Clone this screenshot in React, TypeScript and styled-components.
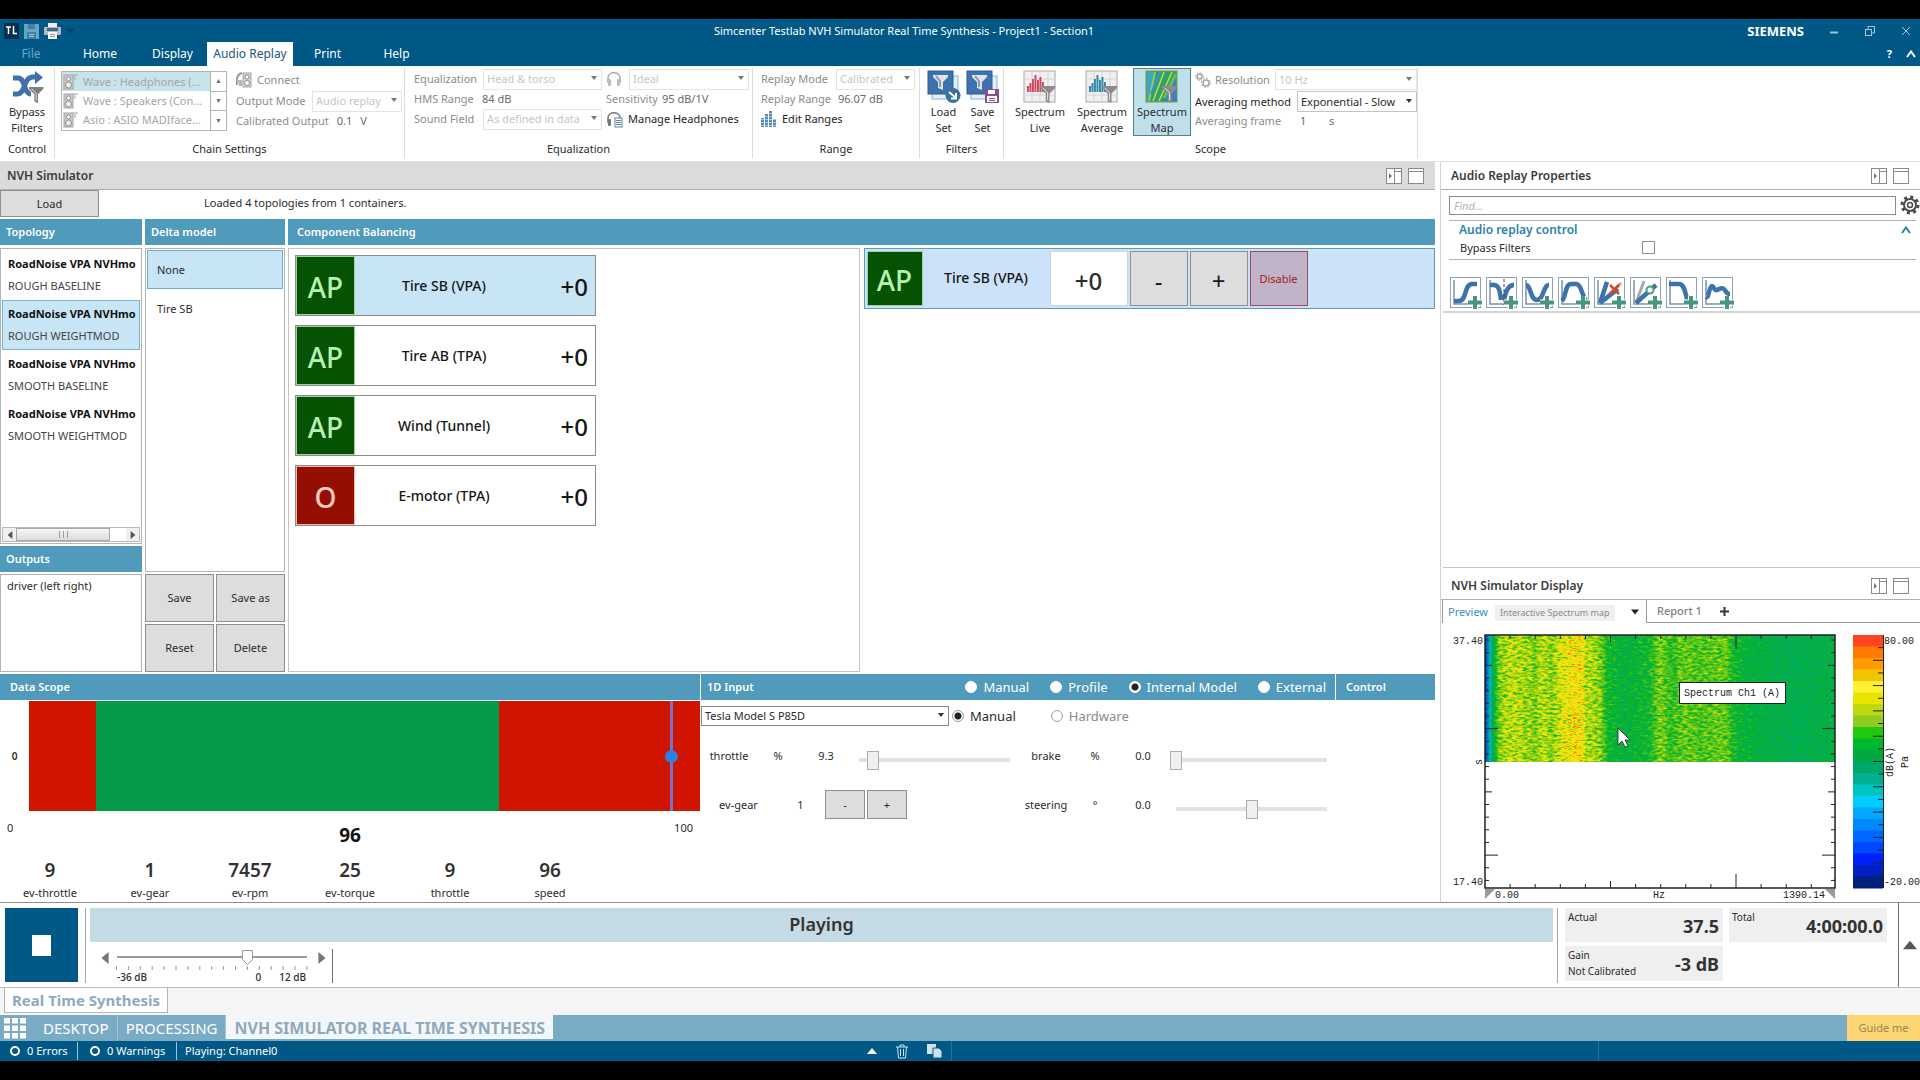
import React from 'react';
import styled, { createGlobalStyle, css } from 'styled-components';

const color = {
  brand: '#005887',
  header: '#509abb',
  nav: '#7aabc4',
  pale: '#c8e5f5',
  button: '#dddddd',
  line: '#b4b4b4',
  ink: '#2b2b2b',
  muted: '#8c8c8c',
};

const GlobalStyle = createGlobalStyle`
  *, *::before, *::after { box-sizing: border-box; }
  body { margin: 0; background: #000; }
  body, button, input, select {
    font-family: "Noto Sans", "Open Sans", sans-serif;
    font-size: 11px;
    line-height: 16px;
    color: ${color.ink};
  }
  button { padding: 0; cursor: pointer; }
  ul, h1, h2 { margin: 0; padding: 0; list-style: none; font-size: inherit; font-weight: inherit; }
  svg { display: block; flex: none; }
`;

/* ---------- shell ---------- */

const Shell = styled.div`
  display: flex;
  flex-direction: column;
  min-height: 100vh;
  padding: 19px 0;
  background: #000;
`;

const TopBar = styled.header`
  background: ${color.brand};
  color: #fff;
`;

const TitleRow = styled.div`
  display: grid;
  grid-template-columns: 1fr auto 1fr;
  align-items: center;
  height: 23px;
  padding: 0 8px 0 4px;
`;

const AppTitle = styled.h1`
  padding-right: 108px;
  line-height: 24px;
`;

const QuickAccess = styled.div`
  display: flex;
  align-items: center;
  gap: 5px;
`;

const IconButton = styled.button`
  display: flex;
  align-items: center;
  justify-content: center;
  border: 0;
  background: none;
  color: inherit;
`;

const WindowButtons = styled.div`
  display: flex;
  align-items: center;
  justify-content: flex-end;
  gap: 24px;
`;

const Vendor = styled.strong`
  font-size: 13px;
`;

const MenuRow = styled.nav`
  display: flex;
  height: 24px;
`;

const MenuTab = styled.button<{ $active?: boolean; $dim?: boolean; $width: number }>`
  width: ${(p) => p.$width}px;
  border: 0;
  font-size: 12px;
  line-height: 22px;
  background: ${(p) => (p.$active ? '#fff' : 'none')};
  color: ${(p) => (p.$active ? '#17587f' : p.$dim ? '#6fa6c4' : '#fff')};
`;

const MenuTail = styled.div`
  display: flex;
  align-items: center;
  gap: 14px;
  margin-left: auto;
  padding-right: 4px;
  font-weight: 700;
`;

/* ---------- ribbon ---------- */

const Ribbon = styled.section`
  display: flex;
  height: 96px;
  padding-top: 2px;
  background: #fff;
  border-bottom: 1px solid #e2e2e2;
`;

const Group = styled.div<{ $width: number }>`
  display: flex;
  flex-direction: column;
  width: ${(p) => p.$width}px;
  height: 90px;
  border-right: 1px solid #dcdcdc;
`;

const GroupBody = styled.div<{ $gap?: number; $pad?: number }>`
  display: flex;
  flex: 1;
  gap: ${(p) => p.$gap ?? 0}px;
  padding-left: ${(p) => p.$pad ?? 0}px;
`;

const GroupLabel = styled.div`
  text-align: center;
  line-height: 18px;
`;

const BigButton = styled.button<{ $width: number; $active?: boolean }>`
  display: flex;
  flex-direction: column;
  align-items: center;
  justify-content: flex-start;
  width: ${(p) => p.$width}px;
  height: 68px;
  padding-top: 1px;
  border: 1px solid ${(p) => (p.$active ? '#4d8296' : 'transparent')};
  background: ${(p) => (p.$active ? '#bfe0ea' : 'none')};
`;

const DeviceList = styled.div`
  display: flex;
  height: 60px;
  margin-top: 3px;
  border: 1px solid ${color.line};
`;

const Device = styled.button<{ $active?: boolean }>`
  display: flex;
  align-items: center;
  gap: 4px;
  width: 148px;
  height: 19px;
  padding: 1px;
  border: 0;
  color: #a6a6a6;
  background: ${(p) => (p.$active ? '#c7e3eb' : 'none')};
`;

const Spinner = styled.div`
  display: flex;
  flex-direction: column;
  border-left: 1px solid ${color.line};
`;

const SpinButton = styled.button`
  flex: 1;
  width: 15px;
  border: 0;
  background: none;
  font-size: 7px;
  line-height: 8px;
  color: #707070;
  & + & { border-top: 1px solid ${color.line}; }
`;

const FieldStack = styled.div`
  display: flex;
  flex-direction: column;
`;

const FieldRow = styled.div<{ $gap?: number; $ink?: boolean; $height?: number }>`
  display: flex;
  align-items: center;
  gap: ${(p) => p.$gap ?? 4}px;
  height: ${(p) => p.$height ?? 20}px;
  color: ${(p) => (p.$ink ? '#1e1e1e' : color.muted)};
  white-space: nowrap;
`;

const FieldLabel = styled.label<{ $width: number }>`
  width: ${(p) => p.$width}px;
`;

const Reading = styled.span<{ $width?: number }>`
  width: ${(p) => (p.$width ? `${p.$width}px` : 'auto')};
  color: #6a6a6a;
`;

const LinkButton = styled.button<{ $muted?: boolean }>`
  display: flex;
  align-items: center;
  gap: 5px;
  border: 0;
  background: none;
  color: ${(p) => (p.$muted ? color.muted : '#1e1e1e')};
`;

const SelectWrap = styled.span<{ $width?: number; $dark?: boolean }>`
  position: relative;
  display: block;
  width: ${(p) => (p.$width ? `${p.$width}px` : '100%')};
  &::after {
    content: '';
    position: absolute;
    right: 5px;
    top: 50%;
    margin-top: -3px;
    border: 3px solid transparent;
    border-top: 4px solid ${(p) => (p.$dark ? '#333' : '#777')};
    border-bottom: 0;
    pointer-events: none;
  }
`;

const SelectBox = styled.select<{ $tone?: 'faint' | 'light' | 'dark' }>`
  appearance: none;
  display: block;
  width: 100%;
  height: ${(p) => (p.$tone === 'dark' ? 20 : 21)}px;
  padding: 0 12px 0 3px;
  border: 1px solid
    ${(p) => (p.$tone === 'dark' ? '#8a8a8a' : p.$tone === 'light' ? '#c4c4c4' : '#e4e4e4')};
  border-radius: 0;
  background: #fff;
  color: ${(p) => (p.$tone === 'faint' ? '#c6c6c6' : color.ink)};
  opacity: 1;
`;

function Select(props: {
  id?: string;
  label?: string;
  value: string;
  width?: number;
  tone?: 'faint' | 'light' | 'dark';
}) {
  const tone = props.tone ?? 'faint';
  return (
    <SelectWrap $width={props.width} $dark={tone !== 'faint'}>
      <SelectBox
        id={props.id}
        aria-label={props.label}
        $tone={tone}
        disabled={tone === 'faint'}
        defaultValue={props.value}
      >
        <option>{props.value}</option>
      </SelectBox>
    </SelectWrap>
  );
}

/* ---------- workspace ---------- */

const Workspace = styled.main`
  display: grid;
  grid-template-columns: minmax(0, 1fr) 480px;
  flex: 1;
  background: #fff;
`;

const LeftPane = styled.section`
  display: flex;
  flex-direction: column;
  min-width: 0;
  padding-right: 5px;
`;

const RightPane = styled.aside`
  display: flex;
  flex-direction: column;
  min-width: 0;
  overflow: hidden;
  border-left: 1px solid #d2d2d2;
`;

const PaneHeader = styled.div<{ $grey?: boolean }>`
  display: flex;
  align-items: center;
  gap: 6px;
  height: 28px;
  padding: 0 11px 0 ${(p) => (p.$grey ? 7 : 10)}px;
  border-bottom: 1px solid #b0b0b0;
  background: ${(p) => (p.$grey ? '#dbdbdb' : '#fff')};
  font-size: 12px;
  font-weight: 600;
  color: #3c3c3c;
`;

const PaneTitle = styled.h2`
  flex: 1;
  font-weight: 600;
`;

const LoadRow = styled.div`
  display: flex;
  align-items: flex-start;
  height: 29px;
`;

const PushButton = styled.button`
  border: 1px solid #8f8f8f;
  background: ${color.button};
`;

const LoadButton = styled(PushButton)`
  width: 99px;
  height: 27px;
`;

const LoadNote = styled.p`
  margin: 0 0 0 105px;
  line-height: 26px;
`;

const Upper = styled.div`
  display: grid;
  grid-template-columns: 142px 140px minmax(0, 1fr);
  gap: 3px;
  flex: 1;
`;

const Column = styled.div`
  display: flex;
  flex-direction: column;
  gap: 2px;
  min-width: 0;
  padding-bottom: 2px;
  > h2:first-child { margin-bottom: 1px; }
`;

const SectionBar = styled.h2<{ $pad?: number }>`
  display: flex;
  align-items: center;
  height: 26px;
  padding: 0 9px 0 ${(p) => p.$pad ?? 6}px;
  background: ${color.header};
  color: #fff;
  font-weight: 600;
`;

const ListBox = styled.ul<{ $grow?: boolean }>`
  display: flex;
  flex-direction: column;
  ${(p) => (p.$grow ? css`flex: 1;` : css`height: 98px;`)}
  padding: 1px;
  border: 1px solid ${color.line};
  overflow: hidden;
`;

const TopologyItem = styled.li<{ $active?: boolean }>`
  display: flex;
  flex-direction: column;
  gap: 6px;
  height: 50px;
  padding: 5px 0 6px 5px;
  white-space: nowrap;
  border: 1px solid ${(p) => (p.$active ? '#7ab3d2' : 'transparent')};
  background: ${(p) => (p.$active ? color.pale : 'none')};
  color: #444;
  strong { color: #111; }
`;

const DeltaItem = styled.li<{ $active?: boolean }>`
  height: 39px;
  padding-left: 9px;
  line-height: 38px;
  border: 1px solid ${(p) => (p.$active ? '#6fadd0' : 'transparent')};
  background: ${(p) => (p.$active ? color.pale : 'none')};
`;

const OutputItem = styled.li`
  padding: 2px 5px;
`;

const HScroll = styled.li`
  display: flex;
  align-items: stretch;
  height: 15px;
  margin-top: auto;
  border: 1px solid #b9b9b9;
  background: #fff;
`;

const HScrollArrow = styled.span`
  display: flex;
  align-items: center;
  justify-content: center;
  width: 13px;
  background: #f0f0f0;
`;

const HScrollThumb = styled.span`
  display: flex;
  align-items: center;
  justify-content: center;
  flex: 1;
  margin-right: 16px;
  border: 1px solid #a9a9a9;
  background: linear-gradient(#f6f6f6, #dcdcdc);
`;

const ButtonGrid = styled.div`
  display: grid;
  grid-template: 48px 48px / 1fr 1fr;
  gap: 2px;
`;

const Balancing = styled.div`
  display: grid;
  grid-template-columns: minmax(0, 571fr) minmax(0, 571fr);
  gap: 4px;
  flex: 1;
`;

const CardList = styled.ul`
  display: flex;
  flex-direction: column;
  gap: 9px;
  padding: 6px;
  border: 1px solid #c4c4c4;
`;

const Card = styled.li<{ $active?: boolean }>`
  display: grid;
  grid-template-columns: 59px 178px 1fr;
  align-items: center;
  width: 301px;
  height: 61px;
  border: 1px solid #8d8d8d;
  background: ${(p) => (p.$active ? color.pale : '#fff')};
  color: #161616;
`;

const Badge = styled.span<{ $off?: boolean }>`
  display: flex;
  align-items: center;
  justify-content: center;
  align-self: stretch;
  padding-top: 3px;
  font-size: 28px;
  font-weight: 500;
  border: 1px solid ${(p) => (p.$off ? '#f2b3ac' : '#9fd09f')};
  background: ${(p) => (p.$off ? '#940f02' : '#055203')};
  color: ${(p) => (p.$off ? '#ffc9c0' : '#b8f0b4')};
`;

const CardName = styled.span`
  text-align: center;
  font-size: 14px;
  font-weight: 500;
`;

const Level = styled.span`
  font-size: 24px;
  font-weight: 500;
  line-height: 32px;
  padding: 2px 7px 0 0;
  text-align: right;
`;

const Detail = styled.div`
  display: flex;
  align-items: stretch;
  gap: 2px;
  height: 61px;
  padding: 2px;
  border: 1px solid #5f9ab8;
  background: #cce2f8;
  color: #161616;
`;

const DetailBadge = styled(Badge)`
  width: 56px;
`;

const DetailName = styled(CardName)`
  width: 123px;
  line-height: 54px;
`;

const LevelInput = styled.input`
  width: 78px;
  border: 1px solid #c9d4de;
  padding: 3px 0 0;
  text-align: center;
  font-size: 24px;
  font-weight: 500;
`;

const StepButton = styled(PushButton)`
  width: 58px;
  padding-top: 4px;
  font-size: 24px;
  color: #161616;
`;

const DisableButton = styled(PushButton)`
  width: 58px;
  border-color: #a0485c;
  background: #bfb4c8;
  color: #a8171c;
`;

/* ---------- lower strip ---------- */

const Lower = styled.div`
  display: grid;
  grid-template-columns: minmax(0, 700fr) minmax(0, 634fr) minmax(0, 99fr);
  gap: 1px;
  height: 228px;
`;

const Bands = styled.div`
  position: relative;
  display: flex;
  height: 110px;
  margin-top: 1px;
`;

const Band = styled.span<{ $ok?: boolean }>`
  background: ${(p) => (p.$ok ? '#049a4c' : '#cf1500')};
`;

const Marker = styled.span`
  position: absolute;
  top: 0;
  bottom: 0;
  width: 3px;
  background: #7a70c8;
  &::after {
    content: '';
    position: absolute;
    left: -5px;
    top: 50%;
    width: 13px;
    height: 13px;
    margin-top: -6px;
    border-radius: 50%;
    background: #2f7fe0;
  }
`;

const ScopeRow = styled.div`
  display: grid;
  grid-template-columns: 29px minmax(0, 1fr);
`;

const AxisZero = styled.span`
  align-self: center;
  text-align: center;
  font-weight: 600;
  font-size: 10px;
`;

const ScopeScale = styled.div`
  display: grid;
  grid-template-columns: 1fr auto 1fr;
  height: 42px;
  padding: 9px 7px 0;
  span:last-child { text-align: right; }
`;

const ScopeValue = styled.strong`
  padding-top: 3px;
  font-size: 19px;
  line-height: 24px;
  color: #111;
`;

const Readouts = styled.dl`
  display: grid;
  grid-template-columns: repeat(7, 1fr);
  margin: 0;
  padding-top: 3px;
  text-align: center;
  div { display: flex; flex-direction: column-reverse; }
  dt { line-height: 17px; }
  dd { margin: 0; font-size: 19px; font-weight: 600; line-height: 28px; color: #333; }
`;

const InputBar = styled(SectionBar)`
  justify-content: flex-end;
  gap: 21px;
  span:first-child { margin-right: auto; }
`;

const RadioLabel = styled.label<{ $muted?: boolean }>`
  display: flex;
  align-items: center;
  gap: 6px;
  font-size: 13px;
  font-weight: 400;
  color: ${(p) => (p.$muted ? '#8a8a8a' : 'inherit')};
`;

const Radio = styled.input`
  appearance: none;
  width: 12px;
  height: 12px;
  margin: 0;
  border: 1px solid #9c9c9c;
  border-radius: 50%;
  background: #fff;
  &:checked { background: radial-gradient(circle, #222 0 3px, #fff 4px); }
`;

const BarRadio = styled(Radio)`
  border-color: #fff;
`;

const ModelRow = styled.div`
  display: flex;
  align-items: center;
  height: 31px;
  ${RadioLabel} { margin-right: 35px; }
  ${SelectWrap} { margin-right: 3px; }
`;

const Controls = styled.div`
  display: grid;
  grid-template-columns: 317px 317px;
  grid-auto-rows: 49px;
`;

const Control = styled.div`
  display: grid;
  grid-template-columns: 56px 42px 54px 163px;
  align-items: center;
  text-align: center;
`;

const GearControl = styled.div`
  display: grid;
  grid-template-columns: 75px 47px 41px 41px;
  gap: 0 1px;
  align-items: center;
  text-align: center;
`;

const GearButton = styled(PushButton)`
  width: 40px;
  height: 29px;
`;

const Range = styled.input`
  appearance: none;
  width: 100%;
  height: 18px;
  margin: 9px 0 0;
  background: linear-gradient(#e2e2e2, #e2e2e2) center / calc(100% - 12px) 4px no-repeat;
  &::-webkit-slider-thumb {
    appearance: none;
    width: 12px;
    height: 19px;
    border: 1px solid #acacac;
    background: #f0f0f0;
  }
`;

/* ---------- right panel ---------- */

const Properties = styled.div`
  display: flex;
  flex-direction: column;
  flex: 1;
  margin-left: 2px;
  border-bottom: 1px solid #c6c6c6;
`;

const FindRow = styled.div`
  display: flex;
  align-items: center;
  gap: 4px;
  height: 30px;
  padding-left: 6px;
`;

const FindInput = styled.input`
  flex: 1;
  height: 19px;
  padding: 0 4px;
  border: 1px solid #8b8b8b;
  &::placeholder { font-style: italic; color: #b4b4b4; }
`;

const PropGroup = styled.div`
  height: 40px;
  margin: 0 4px 0 6px;
  border: 1px solid #b0b0b0;
  border-width: 1px 0;
`;

const PropTitle = styled.div`
  display: flex;
  align-items: center;
  justify-content: space-between;
  height: 18px;
  padding: 0 5px 0 10px;
  font-weight: 600;
  font-size: 12px;
  color: #2b83a4;
`;

const PropRow = styled.div`
  display: flex;
  align-items: center;
  height: 17px;
  padding-left: 11px;
  label { width: 182px; }
`;

const CheckBox = styled.input`
  appearance: none;
  width: 13px;
  height: 13px;
  margin: 0;
  border: 1px solid #909090;
  background: #fff;
`;

const FilterRow = styled.div`
  display: flex;
  gap: 4px;
  height: 53px;
  padding: 17px 0 0 7px;
  border-bottom: 2px solid #d4d4d4;
`;

const FilterButton = styled.button`
  width: 32px;
  height: 32px;
  border: 0;
  background: none;
`;

const Display = styled.div`
  height: 334px;
  padding-top: 4px;
  overflow: hidden;
`;

const DisplayTabs = styled.div`
  display: flex;
  height: 23px;
  padding-left: 1px;
`;

const PreviewTab = styled.div`
  display: flex;
  align-items: center;
  width: 205px;
  padding-left: 5px;
  border: 1px solid #9a9a9a;
  border-width: 0 1px 0 1px;
`;

const TabName = styled.button`
  border: 0;
  background: none;
  color: #3f8fb4;
`;

const PreviewKind = styled.span`
  margin: 2px 16px 0 7px;
  padding: 0 5px;
  font-size: 9px;
  line-height: 16px;
  background: #efefef;
  color: #8a8a8a;
`;

const ReportTab = styled.div`
  display: flex;
  align-items: center;
  flex: 1;
  gap: 18px;
  padding-left: 10px;
  border-bottom: 1px solid #9a9a9a;
`;

const ReportName = styled(TabName)`
  font-weight: 500;
  color: #808080;
`;

const Plot = styled.div`
  padding: 1px 0 0 2px;
`;

const ChartText = styled.text`
  font-family: "Liberation Mono", monospace;
  font-size: 10px;
  fill: #222;
`;

/* ---------- transport ---------- */

const Transport = styled.section`
  display: flex;
  height: 86px;
  background: #fff;
  border-top: 1px solid #8f8f8f;
  border-bottom: 1px solid #bdbdbd;
`;

const StopButton = styled.button`
  display: flex;
  align-items: center;
  justify-content: center;
  width: 73px;
  height: 74px;
  margin: 5px 7px 0 5px;
  border: 0;
  background: ${color.brand};
`;

const StopMark = styled.span`
  width: 19px;
  height: 21px;
  background: #fff;
`;

const PlayColumn = styled.div`
  display: flex;
  flex-direction: column;
  flex: 1;
  height: 75px;
  margin-top: 5px;
  padding: 0 4px;
  border: 1px solid #a8a8a8;
  border-width: 0 1px;
`;

const PlayState = styled.div`
  height: 34px;
  line-height: 33px;
  text-align: center;
  font-size: 18px;
  font-weight: 600;
  background: #c4dae4;
  color: #333;
`;

const VolumeRow = styled.div`
  display: flex;
  width: 243px;
  height: 34px;
  margin-top: 7px;
  padding: 0 9px;
  border-right: 1px solid #6f6f6f;
  gap: 4px;
`;

const VolumeArrow = styled.button`
  align-self: flex-start;
  width: 8px;
  height: 18px;
  border: 0;
  background: none;
`;

const Volume = styled.div`
  display: flex;
  flex-direction: column;
  width: 201px;
`;

const VolumeRange = styled.input`
  appearance: none;
  width: 100%;
  height: 16px;
  margin: 0;
  background: linear-gradient(#9a9a9a, #9a9a9a) center / calc(100% - 11px) 2px no-repeat;
  &::-webkit-slider-thumb {
    appearance: none;
    width: 11px;
    height: 15px;
    background: url("data:image/svg+xml,%3Csvg xmlns='http://www.w3.org/2000/svg' width='11' height='15'%3E%3Cpath d='M.5.5h10v9l-5 5-5-5z' fill='%23fff' stroke='%23999'/%3E%3C/svg%3E");
  }
`;

const VolumeScale = styled.div`
  display: flex;
  gap: 18px;
  justify-content: flex-end;
  padding: 0 6px;
  font-size: 10px;
  font-weight: 500;
  line-height: 12px;
  span:first-child { margin-right: auto; }
`;

const Readings = styled.div`
  display: grid;
  grid-template: 34px 35px / 158px 158px;
  gap: 4px 6px;
  padding: 5px 11px 0 7px;
`;

const ReadingBox = styled.div`
  display: flex;
  align-items: center;
  justify-content: space-between;
  padding: 1px 4px 0 3px;
  background: #efefef;
  line-height: 16px;
  small { align-self: flex-start; font-size: 10px; }
  strong { font-size: 18px; color: #333; }
`;

const Expander = styled.button`
  width: 22px;
  border: 0;
  border-left: 1px solid #6f6f6f;
  background: none;
  display: flex;
  align-items: center;
  justify-content: center;
`;

/* ---------- bottom bars ---------- */

const SheetBar = styled.div`
  display: flex;
  align-items: flex-start;
  height: 27px;
  padding-left: 4px;
  background: #f5f5f5;
`;

const SheetTab = styled.button`
  height: 25px;
  padding: 0 7px;
  border: 1px solid #b4b4b4;
  border-top: 0;
  background: #fff;
  font-size: 15px;
  font-weight: 700;
  color: #8eaabc;
`;

const NavBar = styled.nav`
  display: flex;
  height: 26px;
  background: ${color.nav};
`;

const NavButton = styled.button<{ $active?: boolean }>`
  height: 24px;
  padding: 1px 8px 0;
  border: 0;
  font-size: ${(p) => (p.$active ? 16 : 15)}px;
  font-weight: ${(p) => (p.$active ? 700 : 400)};
  background: ${(p) => (p.$active ? '#f3f7fa' : 'none')};
  color: ${(p) => (p.$active ? '#8faabd' : '#fff')};
  & + & { border-left: 1px solid #a4c6d8; }
`;

const GridButton = styled(IconButton)`
  width: 30px;
  margin-right: 5px;
`;

const GuideButton = styled.button`
  width: 73px;
  margin-left: auto;
  border: 0;
  background: #fdd673;
  color: #93875c;
`;

const StatusBar = styled.footer`
  display: flex;
  align-items: center;
  height: 20px;
  background: ${color.brand};
  color: #fff;
`;

const StatusItem = styled.span<{ $width: number; $pad?: number; $plain?: boolean }>`
  display: flex;
  align-items: center;
  gap: 7px;
  width: ${(p) => p.$width}px;
  height: 18px;
  padding-left: ${(p) => p.$pad ?? 10}px;
  border-right: ${(p) => (p.$plain ? 0 : 1)}px solid #9cc3d8;
`;

const Ring = styled.i`
  width: 10px;
  height: 10px;
  border: 2px solid #fff;
  border-radius: 50%;
`;

const StatusTools = styled.div`
  display: flex;
  align-items: center;
  gap: 18px;
  margin-left: 589px;
  width: 85px;
  height: 20px;
  border-right: 1px solid #1e75a2;
`;

const StatusRest = styled.div`
  flex: 1;
  height: 20px;
  margin-right: 321px;
  border-right: 1px solid #1e75a2;
`;

/* ---------- icons ---------- */

const Funnel = ({ x, y, s = 1, fill = '#8b8b8b' }: { x: number; y: number; s?: number; fill?: string }) => (
  <g transform={`translate(${x} ${y}) scale(${s})`}>
    <path d="M0 0H16V2L10 8V18L6 16V8L0 2Z" fill={fill} />
    <path d="M3 2L8 7V15" stroke="#e8e8e8" fill="none" />
  </g>
);

const BypassIcon = () => (
  <svg width="34" height="34" viewBox="0 0 34 34">
    <path d="M3 8H8C16 8 13 24 21 24M3 24H7C16 24 13 7 23 7H28" fill="none" stroke="#3f70a8" strokeWidth="5" />
    <path d="M25 1L33 7.500L25 14Z" fill="#3f70a8" />
    <Funnel x={19} y={17} s={0.9} fill="#808080" />
  </svg>
);

const SpeakerIcon = ({ size = 16 }: { size?: number }) => (
  <svg width={size} height={size} viewBox="0 0 16 16">
    <rect x="1" y="1" width="9" height="14" fill="#c9c9c9" stroke="#a5a5a5" />
    <circle cx="5.500" cy="5" r="2" fill="#fff" stroke="#909090" />
    <circle cx="5.500" cy="11" r="3" fill="#eee" stroke="#909090" />
    <path d="M10 1H15M12 2V6" stroke="#a5a5a5" fill="none" />
  </svg>
);

const ConnectIcon = () => (
  <svg width="16" height="16" viewBox="0 0 16 16">
    <path d="M1 13C0 6 2 2 6 1" stroke="#999" strokeWidth="2" fill="none" />
    <rect x="7" y="1" width="8" height="14" fill="#d2d2d2" stroke="#a5a5a5" />
    <circle cx="11" cy="5" r="2" fill="#fff" stroke="#909090" />
    <circle cx="11" cy="11" r="2.500" fill="#fff" stroke="#909090" />
    <path d="M2 8H6V14H3Z" fill="#b4b4b4" />
  </svg>
);

const HeadphonesIcon = ({ extra }: { extra?: boolean }) => (
  <svg width="17" height="17" viewBox="0 0 17 17">
    <path d="M2 12V7C2 0 14 0 14 7V12" fill="none" stroke={extra ? '#777' : '#aaa'} strokeWidth="1.500" />
    <rect x="2" y="8" width="3" height="7" rx="1" fill={extra ? '#777' : '#bbb'} />
    {extra ? (
      <g>
        <rect x="9" y="7" width="7" height="9" fill="#fff" stroke="#6482a0" />
        <path d="M10 9.500H15M10 11.500H15M10 13.500H15" stroke="#6482a0" />
      </g>
    ) : (
      <rect x="11" y="8" width="3" height="7" rx="1" fill="#bbb" />
    )}
  </svg>
);

const BarsIcon = () => (
  <svg width="16" height="16" viewBox="0 0 16 16">
    {[9, 13, 16, 8].map((h, i) => (
      <rect key={i} x={i * 4} y={16 - h} width="3" height={h} fill="#5a8db5" />
    ))}
    <path d="M0 2.500H16M0 5.500H16M0 8.500H16M0 11.500H16M0 14.500H16" stroke="#fff" strokeWidth=".5" />
  </svg>
);

const FilterSetIcon = ({ save }: { save?: boolean }) => (
  <svg width="34" height="34" viewBox="0 0 34 34">
    <rect x="5" y="6" width="26" height="23" fill="#e3f0fa" stroke="#86b4d8" />
    <rect x="1" y="1" width="25" height="23" fill="#3d72ad" stroke="#2c5a92" />
    <path d="M6 5H21V7L16 12V20L11 18V12L6 7Z" fill="#dfe3e8" />
    <path d="M9 6L13 11V17" stroke="#8d9aa8" fill="none" strokeWidth="2" />
    {save ? (
      <g>
        <path d="M19 19H33V33H19Z" fill="#8a4e93" />
        <rect x="22" y="20" width="7" height="4" fill="#fff" />
        <rect x="21" y="26" width="10" height="6" fill="#fff" />
        <path d="M23 28.500H29M23 30.500H29" stroke="#8a4e93" />
      </g>
    ) : (
      <g>
        <circle cx="26" cy="25.500" r="7.500" fill="#3a6f9f" />
        <path d="M22 22L29 28M29 23V28.500H24" stroke="#fff" strokeWidth="2" fill="none" />
      </g>
    )}
  </svg>
);

const SpectrumIcon = ({ tint }: { tint: string }) => (
  <svg width="34" height="34" viewBox="0 0 34 34">
    <rect x="1" y="1" width="31" height="31" fill="#f0f0f0" stroke="#a8a8a8" />
    <path d="M9 1V32M17 1V32M25 1V32M1 9H32M1 17H32M1 25H32" stroke="#d6d6d6" />
    {[6, 9, 13, 17, 12, 15, 10, 6, 4].map((h, i) => (
      <rect key={i} x={4 + i * 2.5} y={22 - h} width="1.900" height={h} fill={tint} />
    ))}
    <Funnel x={17} y={16} s={0.95} />
  </svg>
);

const MapIcon = () => (
  <svg width="34" height="34" viewBox="0 0 34 34">
    <rect x="1" y="1" width="31" height="31" fill="#2fa070" stroke="#8f9a3c" />
    <path d="M2 2H10L4 31H2Z" fill="#39a7c9" />
    <path d="M10 2L4 31" stroke="#8fd050" strokeWidth="2" />
    <path d="M19 2L8 31M27 2L14 31" stroke="#c4dc3c" strokeWidth="1.500" />
    <path d="M15 2L6 24" stroke="#3f8fd0" strokeWidth="2" />
    <path d="M31 6L18 31H32Z" fill="#3a7fc8" />
    <path d="M31 4L19 28" stroke="#63c04c" strokeWidth="3" />
    <Funnel x={17} y={16} s={0.95} />
  </svg>
);

const GearsIcon = () => (
  <svg width="16" height="16" viewBox="0 0 16 16" fill="none" stroke="#a5a5a5">
    <circle cx="4.500" cy="4.500" r="2.500" strokeWidth="1.500" />
    <circle cx="4.500" cy="4.500" r="4" strokeDasharray="1.500 1.600" />
    <circle cx="11" cy="11" r="3" strokeWidth="1.500" />
    <circle cx="11" cy="11" r="4.500" strokeDasharray="1.700 1.800" />
  </svg>
);

const GearIcon = () => (
  <svg width="20" height="20" viewBox="0 0 20 20" fill="none" stroke="#4a4a4a">
    <circle cx="10" cy="10" r="6" strokeWidth="2" />
    <circle cx="10" cy="10" r="8" strokeWidth="3" strokeDasharray="3 3.280" />
    <circle cx="10" cy="10" r="2.500" strokeWidth="1.500" />
  </svg>
);

const DockIcon = ({ split }: { split?: boolean }) => (
  <svg width="16" height="16" viewBox="0 0 16 16">
    <rect x=".5" y=".5" width="15" height="15" fill="#fff" stroke="#8a8a8a" />
    {split ? (
      <path d="M8.500 1V15M9 3.500H15" stroke="#8a8a8a" fill="none" />
    ) : (
      <path d="M1 3.500H15" stroke="#8a8a8a" />
    )}
    {split && <path d="M3 5L6 8L3 11Z" fill="#777" />}
  </svg>
);

const Chevron = ({ stroke = '#fff' }: { stroke?: string }) => (
  <svg width="10" height="8" viewBox="0 0 10 8">
    <path d="M1 7L5 1.500L9 7" fill="none" stroke={stroke} strokeWidth="2" />
  </svg>
);

const Triangle = ({ dir, size = 8, fill = '#555' }: { dir: 'up' | 'down' | 'left' | 'right'; size?: number; fill?: string }) => {
  const d = { up: 'M0 8L5 2L10 8Z', down: 'M0 2L5 8L10 2Z', left: 'M8 0L2 5L8 10Z', right: 'M2 0L8 5L2 10Z' }[dir];
  return (
    <svg width={size} height={size} viewBox="0 0 10 10">
      <path d={d} fill={fill} />
    </svg>
  );
};

const filterPaths = [
  { d: 'M4 24H9C17 24 14 7 22 7H27' },
  { d: 'M4 8H8C13 8 14 14 15 23M28 8C22 8 20 14 18 23', dash: true },
  { d: 'M4 8C9 8 8 23 15 23C22 23 21 8 27 8' },
  { d: 'M4 24C8 20 7 7 13 7H18C23 7 24 18 28 24' },
  { d: 'M6 26L13 5M6 26L24 12', mark: 'cross' },
  { d: 'M6 26L26 8', mark: 'tick' },
  { d: 'M3 7H13C19 7 19 17 22 25' },
  { d: 'M4 20C7 22 7 9 10 9C12 9 12 14 15 13C18 12 19 10 22 12C24 14 24 17 28 17' },
];

const FilterIcon = ({ d, dash, mark }: { d: string; dash?: boolean; mark?: string }) => (
  <svg width="32" height="32" viewBox="0 0 32 32">
    <rect x=".5" y=".5" width="30" height="30" fill="#fff" stroke="#8fa3b3" />
    <path d="M4 3V27H28" stroke="#7d93a6" fill="none" strokeWidth="1.500" />
    {mark && <path d={mark === 'tick' ? 'M6 26L14 4' : 'M6 26L27 6'} stroke="#a9a9a9" strokeWidth="3" />}
    <path d={d} stroke="#3d72ad" strokeWidth="4.500" fill="none" />
    {dash && <path d="M18 2V28" stroke="#444" strokeDasharray="3 2" />}
    {mark === 'cross' && <path d="M16 8L25 17M25 8L16 17" stroke="#d04a24" strokeWidth="2.500" />}
    {mark === 'tick' && <circle cx="20" cy="13" r="3.500" fill="#fff" stroke="#4f9f7c" strokeWidth="2" />}
    <path d="M25 19V32M18 25.500H32" stroke="#fff" strokeWidth="6" />
    <path d="M25 19V32M18 25.500H32" stroke="#4a9580" strokeWidth="4" />
  </svg>
);

/* ---------- spectrum map ---------- */

const legend = [
  '#ff4422', '#ff7a00', '#ff9a00', '#f0c400', '#fff033', '#e8e600', '#c0d810', '#90cc20',
  '#20c810', '#00b830', '#00a840', '#00a868', '#00b090', '#00c4c0', '#00ccff', '#00a8ff',
  '#0088ff', '#0068ff', '#0048ff', '#0020f8', '#0020c0', '#002080',
];

const intensity: [number, number][] = [
  [0, 0.1], [1, 0.28], [2, 0.5], [4, 0.7], [7, 0.76], [11, 0.74], [14, 0.7], [17, 0.76],
  [19, 0.7], [22, 0.8], [25, 0.86], [28, 0.84], [29, 0.74], [31, 0.74], [33, 0.7], [35, 0.6],
  [40, 0.57], [47, 0.6], [50, 0.7], [53, 0.63], [57, 0.68], [62, 0.66], [67, 0.68],
  [69, 0.68], [71, 0.6], [76, 0.57], [88, 0.54], [100, 0.56],
];

const grey = (v: number) => {
  const g = Math.round(v * 255);
  return `rgb(${g},${g},${g})`;
};

const PLOT = { x: 42, y: 11, w: 350, h: 253, filled: 127 };

function SpectrumMap() {
  const { x, y, w, h, filled } = PLOT;
  const step = h / 20;
  const right = x + w;
  const bottom = y + h;
  const xTicks = Array.from({ length: 13 }, (_, i) => {
    const n = i + 1;
    const len = n === 10 ? 14 : n === 5 ? 7 : 4;
    const px = x + n * 25.1;
    return `M${px} ${y}v${len}M${px} ${bottom}v${-len}`;
  }).join('');
  const yTicks = Array.from({ length: 20 }, (_, i) => {
    const v = 37 - i;
    const len = v % 10 === 0 ? 13 : v % 5 === 0 ? 7 : 4;
    const py = y + (i + 0.4) * step;
    return `M${x} ${py}h${len}M${right} ${py}h${-len}`;
  }).join('');
  const legendTicks = Array.from({ length: 19 }, (_, i) => {
    const n = i + 1;
    return `M440 ${y + n * step}h${n % 2 ? -5 : -10}`;
  }).join('');

  return (
    <svg width="477" height="278" viewBox="0 0 477 278" role="img" aria-label="Interactive Spectrum map">
      <defs>
        <linearGradient id="levels">
          {intensity.map(([at, v]) => (
            <stop key={at} offset={`${at}%`} stopColor={grey(v)} />
          ))}
        </linearGradient>
        <filter id="spectrum" x="0" y="0" width="100%" height="100%" colorInterpolationFilters="sRGB">
          <feTurbulence type="fractalNoise" baseFrequency="0.2 0.45" numOctaves="2" seed="7" />
          <feColorMatrix
            values="1 0 0 0 0  1 0 0 0 0  1 0 0 0 0  0 0 0 0 1"
            result="noise"
          />
          <feComposite in="SourceGraphic" in2="noise" operator="arithmetic" k1="1.3" k2="0.35" k3="-0.5" k4="0.25" />
          <feComponentTransfer>
            <feFuncR type="table" tableValues="0 0 0 0 0 0 0.03 0.48 0.9 1 1" />
            <feFuncG type="table" tableValues="0.15 0.25 0.4 0.6 0.74 0.66 0.71 0.8 0.9 0.88 0.5" />
            <feFuncB type="table" tableValues="0.5 0.75 0.8 0.75 0.62 0.42 0.16 0.08 0.04 0.08 0" />
            <feFuncA type="linear" slope="0" intercept="1" />
          </feComponentTransfer>
        </filter>
      </defs>
      <rect x={x} y={y} width={w} height={filled} fill="url(#levels)" filter="url(#spectrum)" />
      <rect x={x} y={y} width={w} height={h} fill="none" stroke="#222" strokeWidth="1.500" />
      <path d={xTicks + yTicks} stroke="#222" fill="none" />

      {legend.map((c, i) => (
        <rect key={c} x="410" y={y + i * 11.5} width="30" height="12" fill={c} />
      ))}
      <path d={`M440.500 ${y}V${bottom}`} stroke="#222" />
      <path d={legendTicks} stroke="#222" />

      <ChartText x="40" y="20" textAnchor="end">37.40</ChartText>
      <ChartText x="40" y="261" textAnchor="end">17.40</ChartText>
      <ChartText x="441" y="20">80.00</ChartText>
      <ChartText x="441" y="261">-20.00</ChartText>
      <ChartText x="52" y="274">0.00</ChartText>
      <ChartText x="210" y="274">Hz</ChartText>
      <ChartText x="382" y="274" textAnchor="end">1390.14</ChartText>
      <ChartText transform="translate(39 141) rotate(-90)">s</ChartText>
      <ChartText transform="translate(450 153) rotate(-90)">dB(A)</ChartText>
      <ChartText transform="translate(465 144) rotate(-90)">Pa</ChartText>
      <path d="M42 265H52L42 275ZM392 265H382L392 275Z" fill="#9a9a9a" />

      <rect x="236.500" y="58.500" width="106" height="21" fill="#fff" stroke="#222" />
      <ChartText x="241" y="72">Spectrum Ch1 (A)</ChartText>
      <path d="M175 104V121L179 117L182 123L185 122L182 116H187Z" fill="#fff" stroke="#222" strokeWidth=".8" />
    </svg>
  );
}

/* ---------- data ---------- */

const topologies = ['ROUGH BASELINE', 'ROUGH WEIGHTMOD', 'SMOOTH BASELINE', 'SMOOTH WEIGHTMOD'];
const components = [
  { badge: 'AP', name: 'Tire SB (VPA)' },
  { badge: 'AP', name: 'Tire AB (TPA)' },
  { badge: 'AP', name: 'Wind (Tunnel)' },
  { badge: 'O', name: 'E-motor (TPA)' },
];
const bands = [
  { share: 10, ok: false },
  { share: 60, ok: true },
  { share: 30, ok: false },
];
const speed = 96;
const readouts = [
  ['ev-throttle', '9'], ['ev-gear', '1'], ['ev-rpm', '7457'],
  ['ev-torque', '25'], ['throttle', '9'], ['speed', String(speed)],
];
const inputModes = ['Manual', 'Profile', 'Internal Model', 'External'];

function PaneTools() {
  return (
    <>
      <IconButton aria-label="Dock"><DockIcon split /></IconButton>
      <IconButton aria-label="Maximize"><DockIcon /></IconButton>
    </>
  );
}

function SliderControl({ name, unit, text, value }: { name: string; unit: string; text: string; value: number }) {
  return (
    <Control>
      <label htmlFor={name}>{name}</label>
      <span>{unit}</span>
      <span>{text}</span>
      <Range id={name} type="range" min={0} max={100} step="any" defaultValue={value} />
    </Control>
  );
}

/* ---------- page ---------- */

export default function App() {
  return (
    <>
      <GlobalStyle />
      <Shell>
        <TopBar>
          <TitleRow>
            <QuickAccess>
              <svg width="15" height="16" viewBox="0 0 15 16">
                <rect width="15" height="16" fill="#06304e" />
                <path d="M2 4H7M4.500 4V11M9.500 3V10.500H13" stroke="#fff" strokeWidth="1.500" fill="none" />
              </svg>
              <IconButton aria-label="Save">
                <svg width="15" height="15" viewBox="0 0 15 15">
                  <path d="M0 0H15V15H0Z" fill="#6ba3c3" />
                  <path d="M4 0H11V5H4ZM3 8H12V15H3Z" fill="#3c83ab" />
                  <path d="M5 10.500H10M5 12.500H10" stroke="#9cc4da" />
                </svg>
              </IconButton>
              <IconButton aria-label="Print">
                <svg width="17" height="16" viewBox="0 0 17 16">
                  <rect x="4" y="0" width="9" height="5" fill="#f0f0f0" />
                  <rect x="0" y="4" width="17" height="8" rx="1" fill="#b9b9b9" />
                  <rect x="3" y="5" width="11" height="3" fill="#2f6f9b" />
                  <rect x="4" y="9" width="9" height="7" fill="#f7f7f7" />
                  <path d="M6 11.500H11M6 13.500H11" stroke="#999" />
                </svg>
              </IconButton>
              <IconButton aria-label="Customize toolbar"><Triangle dir="down" fill="#063a5c" /></IconButton>
            </QuickAccess>
            <AppTitle>Simcenter Testlab NVH Simulator Real Time Synthesis - Project1 - Section1</AppTitle>
            <WindowButtons>
              <Vendor>SIEMENS</Vendor>
              <IconButton aria-label="Minimize">
                <svg width="12" height="12"><path d="M2 7.500H10" stroke="#9fc6dc" strokeWidth="2" /></svg>
              </IconButton>
              <IconButton aria-label="Restore">
                <svg width="12" height="12" fill="none" stroke="#9fc6dc">
                  <rect x="1.500" y="4.500" width="6" height="6" /><path d="M4 4V1.500H10.500V8H8" />
                </svg>
              </IconButton>
              <IconButton aria-label="Close">
                <svg width="12" height="12"><path d="M2 2L10 10M10 2L2 10" stroke="#9fc6dc" /></svg>
              </IconButton>
            </WindowButtons>
          </TitleRow>
          <MenuRow>
            <MenuTab $width={62} $dim>File</MenuTab>
            <MenuTab $width={76}>Home</MenuTab>
            <MenuTab $width={69}>Display</MenuTab>
            <MenuTab $width={86} $active>Audio Replay</MenuTab>
            <MenuTab $width={69}>Print</MenuTab>
            <MenuTab $width={69}>Help</MenuTab>
            <MenuTail>
              <span>?</span>
              <IconButton aria-label="Collapse ribbon"><Chevron /></IconButton>
            </MenuTail>
          </MenuRow>
        </TopBar>

        <Ribbon>
          <Group $width={55}>
            <GroupBody>
              <BigButton $width={55}><BypassIcon /><span>Bypass<br />Filters</span></BigButton>
            </GroupBody>
            <GroupLabel>Control</GroupLabel>
          </Group>
          <Group $width={350}>
            <GroupBody $pad={6} $gap={9}>
              <DeviceList>
                <div>
                  <Device $active><SpeakerIcon />Wave : Headphones (...</Device>
                  <Device><SpeakerIcon />Wave : Speakers (Con...</Device>
                  <Device><SpeakerIcon />Asio : ASIO MADIface...</Device>
                </div>
                <Spinner>
                  <SpinButton>▲</SpinButton><SpinButton>▼</SpinButton><SpinButton>▼</SpinButton>
                </Spinner>
              </DeviceList>
              <FieldStack>
                <FieldRow $height={23}><LinkButton $muted><ConnectIcon />Connect</LinkButton></FieldRow>
                <FieldRow>
                  <FieldLabel $width={72} htmlFor="output-mode">Output Mode</FieldLabel>
                  <Select id="output-mode" value="Audio replay" width={90} />
                </FieldRow>
                <FieldRow $gap={8}><span>Calibrated Output</span><Reading>0.1</Reading><Reading>V</Reading></FieldRow>
              </FieldStack>
            </GroupBody>
            <GroupLabel>Chain Settings</GroupLabel>
          </Group>
          <Group $width={348}>
            <GroupBody $pad={9} $gap={4}>
              <FieldStack>
                <FieldRow $height={22}>
                  <FieldLabel $width={65} htmlFor="equalization">Equalization</FieldLabel>
                  <Select id="equalization" value="Head & torso" width={119} />
                </FieldRow>
                <FieldRow $height={18}><FieldLabel as="span" $width={64}>HMS Range</FieldLabel><Reading>84 dB</Reading></FieldRow>
                <FieldRow $height={22}>
                  <FieldLabel $width={65} htmlFor="sound-field">Sound Field</FieldLabel>
                  <Select id="sound-field" value="As defined in data" width={119} />
                </FieldRow>
              </FieldStack>
              <FieldStack>
                <FieldRow $height={22} $gap={6}><HeadphonesIcon /><Select label="Headphones" value="Ideal" width={120} /></FieldRow>
                <FieldRow $height={18}><span>Sensitivity</span><Reading>95 dB/1V</Reading></FieldRow>
                <FieldRow $height={22}><LinkButton><HeadphonesIcon extra />Manage Headphones</LinkButton></FieldRow>
              </FieldStack>
            </GroupBody>
            <GroupLabel>Equalization</GroupLabel>
          </Group>
          <Group $width={167}>
            <GroupBody $pad={8}>
              <FieldStack>
                <FieldRow $height={22}>
                  <FieldLabel $width={71} htmlFor="replay-mode">Replay Mode</FieldLabel>
                  <Select id="replay-mode" value="Calibrated" width={79} />
                </FieldRow>
                <FieldRow $height={18}><FieldLabel as="span" $width={73}>Replay Range</FieldLabel><Reading>96.07 dB</Reading></FieldRow>
                <FieldRow $height={22}><LinkButton><BarsIcon />Edit Ranges</LinkButton></FieldRow>
              </FieldStack>
            </GroupBody>
            <GroupLabel>Range</GroupLabel>
          </Group>
          <Group $width={84}>
            <GroupBody $pad={4}>
              <BigButton $width={39}><FilterSetIcon /><span>Load<br />Set</span></BigButton>
              <BigButton $width={39}><FilterSetIcon save /><span>Save<br />Set</span></BigButton>
            </GroupBody>
            <GroupLabel>Filters</GroupLabel>
          </Group>
          <Group $width={414}>
            <GroupBody $pad={5}>
              <BigButton $width={62}><SpectrumIcon tint="#d0455f" /><span>Spectrum<br />Live</span></BigButton>
              <BigButton $width={62}><SpectrumIcon tint="#2f86ac" /><span>Spectrum<br />Average</span></BigButton>
              <BigButton $width={58} $active><MapIcon /><span>Spectrum<br />Map</span></BigButton>
              <FieldStack>
                <FieldRow $height={23}>
                  <FieldLabel $width={0} /><GearsIcon />
                  <FieldLabel $width={56} htmlFor="resolution">Resolution</FieldLabel>
                  <Select id="resolution" value="10 Hz" width={142} />
                </FieldRow>
                <FieldRow $ink $height={21}>
                  <FieldLabel $width={0} />
                  <FieldLabel $width={98} htmlFor="averaging">Averaging method</FieldLabel>
                  <Select id="averaging" value="Exponential - Slow" width={120} tone="light" />
                </FieldRow>
                <FieldRow $height={18}>
                  <FieldLabel $width={0} />
                  <FieldLabel as="span" $width={101}>Averaging frame</FieldLabel>
                  <Reading $width={25}>1</Reading><Reading>s</Reading>
                </FieldRow>
              </FieldStack>
            </GroupBody>
            <GroupLabel>Scope</GroupLabel>
          </Group>
        </Ribbon>

        <Workspace>
          <LeftPane>
            <PaneHeader $grey><PaneTitle>NVH Simulator</PaneTitle><PaneTools /></PaneHeader>
            <LoadRow>
              <LoadButton>Load</LoadButton>
              <LoadNote>Loaded 4 topologies from 1 containers.</LoadNote>
            </LoadRow>
            <Upper>
              <Column>
                <SectionBar>Topology</SectionBar>
                <ListBox $grow>
                  {topologies.map((t, i) => (
                    <TopologyItem key={t} $active={i === 1}>
                      <strong>RoadNoise VPA NVHmo</strong>
                      <span>{t}</span>
                    </TopologyItem>
                  ))}
                  <HScroll aria-hidden>
                    <HScrollArrow><Triangle dir="left" /></HScrollArrow>
                    <HScrollThumb>
                      <svg width="9" height="7"><path d="M.5 0V7M4.500 0V7M8.500 0V7" stroke="#999" /></svg>
                    </HScrollThumb>
                    <HScrollArrow><Triangle dir="right" /></HScrollArrow>
                  </HScroll>
                </ListBox>
                <SectionBar>Outputs</SectionBar>
                <ListBox><OutputItem>driver (left right)</OutputItem></ListBox>
              </Column>
              <Column>
                <SectionBar>Delta model</SectionBar>
                <ListBox $grow>
                  <DeltaItem $active>None</DeltaItem>
                  <DeltaItem>Tire SB</DeltaItem>
                </ListBox>
                <ButtonGrid>
                  <PushButton>Save</PushButton><PushButton>Save as</PushButton>
                  <PushButton>Reset</PushButton><PushButton>Delete</PushButton>
                </ButtonGrid>
              </Column>
              <Column>
                <SectionBar $pad={9}>Component Balancing</SectionBar>
                <Balancing>
                  <CardList>
                    {components.map((c, i) => (
                      <Card key={c.name} $active={i === 0}>
                        <Badge $off={c.badge === 'O'}>{c.badge}</Badge>
                        <CardName>{c.name}</CardName>
                        <Level>+0</Level>
                      </Card>
                    ))}
                  </CardList>
                  <div>
                    <Detail>
                      <DetailBadge>AP</DetailBadge>
                      <DetailName>Tire SB (VPA)</DetailName>
                      <LevelInput aria-label="Level" defaultValue="+0" />
                      <StepButton>-</StepButton>
                      <StepButton>+</StepButton>
                      <DisableButton>Disable</DisableButton>
                    </Detail>
                  </div>
                </Balancing>
              </Column>
            </Upper>
            <Lower>
              <div>
                <SectionBar $pad={10}>Data Scope</SectionBar>
                <ScopeRow>
                  <AxisZero>0</AxisZero>
                  <Bands>
                    {bands.map((b, i) => (
                      <Band key={i} $ok={b.ok} style={{ width: `${b.share}%` }} />
                    ))}
                    <Marker style={{ left: `calc(${speed}% - 3px)` }} />
                  </Bands>
                </ScopeRow>
                <ScopeScale><span>0</span><ScopeValue>{speed}</ScopeValue><span>100</span></ScopeScale>
                <Readouts>
                  {readouts.map(([name, value]) => (
                    <div key={name}><dt>{name}</dt><dd>{value}</dd></div>
                  ))}
                </Readouts>
              </div>
              <div>
                <InputBar>
                  <span>1D Input</span>
                  {inputModes.map((m) => (
                    <RadioLabel key={m}>
                      <BarRadio type="radio" name="input-mode" defaultChecked={m === 'Internal Model'} />{m}
                    </RadioLabel>
                  ))}
                </InputBar>
                <ModelRow>
                  <Select label="Vehicle model" value="Tesla Model S P85D" width={248} tone="dark" />
                  <RadioLabel><Radio type="radio" name="source" defaultChecked />Manual</RadioLabel>
                  <RadioLabel $muted><Radio type="radio" name="source" />Hardware</RadioLabel>
                </ModelRow>
                <Controls>
                  <SliderControl name="throttle" unit="%" text="9.3" value={9.3} />
                  <SliderControl name="brake" unit="%" text="0.0" value={0} />
                  <GearControl>
                    <span>ev-gear</span><span>1</span>
                    <GearButton>-</GearButton><GearButton>+</GearButton>
                  </GearControl>
                  <SliderControl name="steering" unit="°" text="0.0" value={50} />
                </Controls>
              </div>
              <div><SectionBar $pad={10}>Control</SectionBar></div>
            </Lower>
          </LeftPane>

          <RightPane>
            <PaneHeader><PaneTitle>Audio Replay Properties</PaneTitle><PaneTools /></PaneHeader>
            <Properties>
              <FindRow>
                <FindInput placeholder="Find..." aria-label="Find" />
                <IconButton aria-label="Settings"><GearIcon /></IconButton>
              </FindRow>
              <PropGroup>
                <PropTitle>Audio replay control<Chevron stroke="#2b83a4" /></PropTitle>
                <PropRow><label htmlFor="bypass">Bypass Filters</label><CheckBox id="bypass" type="checkbox" /></PropRow>
              </PropGroup>
              <FilterRow>
                {filterPaths.map((f, i) => (
                  <FilterButton key={i} aria-label={`Add filter ${i + 1}`}><FilterIcon {...f} /></FilterButton>
                ))}
              </FilterRow>
            </Properties>
            <Display>
              <PaneHeader><PaneTitle>NVH Simulator Display</PaneTitle><PaneTools /></PaneHeader>
              <DisplayTabs>
                <PreviewTab>
                  <TabName>Preview</TabName>
                  <PreviewKind>Interactive Spectrum map</PreviewKind>
                  <Triangle dir="down" fill="#222" />
                </PreviewTab>
                <ReportTab>
                  <ReportName>Report 1</ReportName>
                  <IconButton aria-label="Add report">
                    <svg width="9" height="9"><path d="M4.500 0V9M0 4.500H9" stroke="#333" strokeWidth="2" /></svg>
                  </IconButton>
                </ReportTab>
              </DisplayTabs>
              <Plot><SpectrumMap /></Plot>
            </Display>
          </RightPane>
        </Workspace>

        <Transport>
          <StopButton aria-label="Stop"><StopMark /></StopButton>
          <PlayColumn>
            <PlayState>Playing</PlayState>
            <VolumeRow>
              <VolumeArrow aria-label="Lower gain"><Triangle dir="left" size={12} fill="#777" /></VolumeArrow>
              <Volume>
                <VolumeRange type="range" aria-label="Gain" min={-36} max={12} defaultValue={-3} />
                <svg width="201" height="6">
                  {Array.from({ length: 17 }, (_, i) => (
                    <path key={i} d={`M${5.5 + i * 11.9} 1V5`} stroke="#999" />
                  ))}
                </svg>
                <VolumeScale><span>-36 dB</span><span>0</span><span>12 dB</span></VolumeScale>
              </Volume>
              <VolumeArrow aria-label="Raise gain"><Triangle dir="right" size={12} fill="#777" /></VolumeArrow>
            </VolumeRow>
          </PlayColumn>
          <Readings>
            <ReadingBox><small>Actual</small><strong>37.5</strong></ReadingBox>
            <ReadingBox><small>Total</small><strong>4:00:00.0</strong></ReadingBox>
            <ReadingBox><small>Gain<br />Not Calibrated</small><strong>-3 dB</strong></ReadingBox>
          </Readings>
          <Expander aria-label="Expand"><Triangle dir="up" size={14} /></Expander>
        </Transport>

        <SheetBar><SheetTab>Real Time Synthesis</SheetTab></SheetBar>
        <NavBar>
          <GridButton aria-label="Applications">
            <svg width="22" height="21" fill="#fff">
              {[0, 1, 2].flatMap((r) => [0, 1, 2].map((c) => (
                <rect key={`${r}${c}`} x={c * 8} y={r * 7.5} width="6" height="5.500" />
              )))}
            </svg>
          </GridButton>
          <NavButton>DESKTOP</NavButton>
          <NavButton>PROCESSING</NavButton>
          <NavButton $active>NVH SIMULATOR REAL TIME SYNTHESIS</NavButton>
          <GuideButton>Guide me</GuideButton>
        </NavBar>
        <StatusBar>
          <StatusItem $width={78}><Ring />0 Errors</StatusItem>
          <StatusItem $width={99} $pad={12}><Ring />0 Warnings</StatusItem>
          <StatusItem $width={101} $pad={8} $plain>Playing: Channel0</StatusItem>
          <StatusTools>
            <Triangle dir="up" size={10} fill="#fff" />
            <svg width="14" height="15" viewBox="0 0 14 15" fill="none" stroke="#cfe2ec">
              <path d="M1 3H13M5 3V1H9V3M2.500 3L3.500 14H10.500L11.500 3M5.500 5V12M8.500 5V12" />
            </svg>
            <svg width="16" height="15" viewBox="0 0 16 15" fill="#cfe2ec">
              <rect x="0" y="0" width="9" height="10" />
              <path d="M6 4H12L15 7V14H6Z" stroke="#005887" />
            </svg>
          </StatusTools>
          <StatusRest />
        </StatusBar>
      </Shell>
    </>
  );
}
